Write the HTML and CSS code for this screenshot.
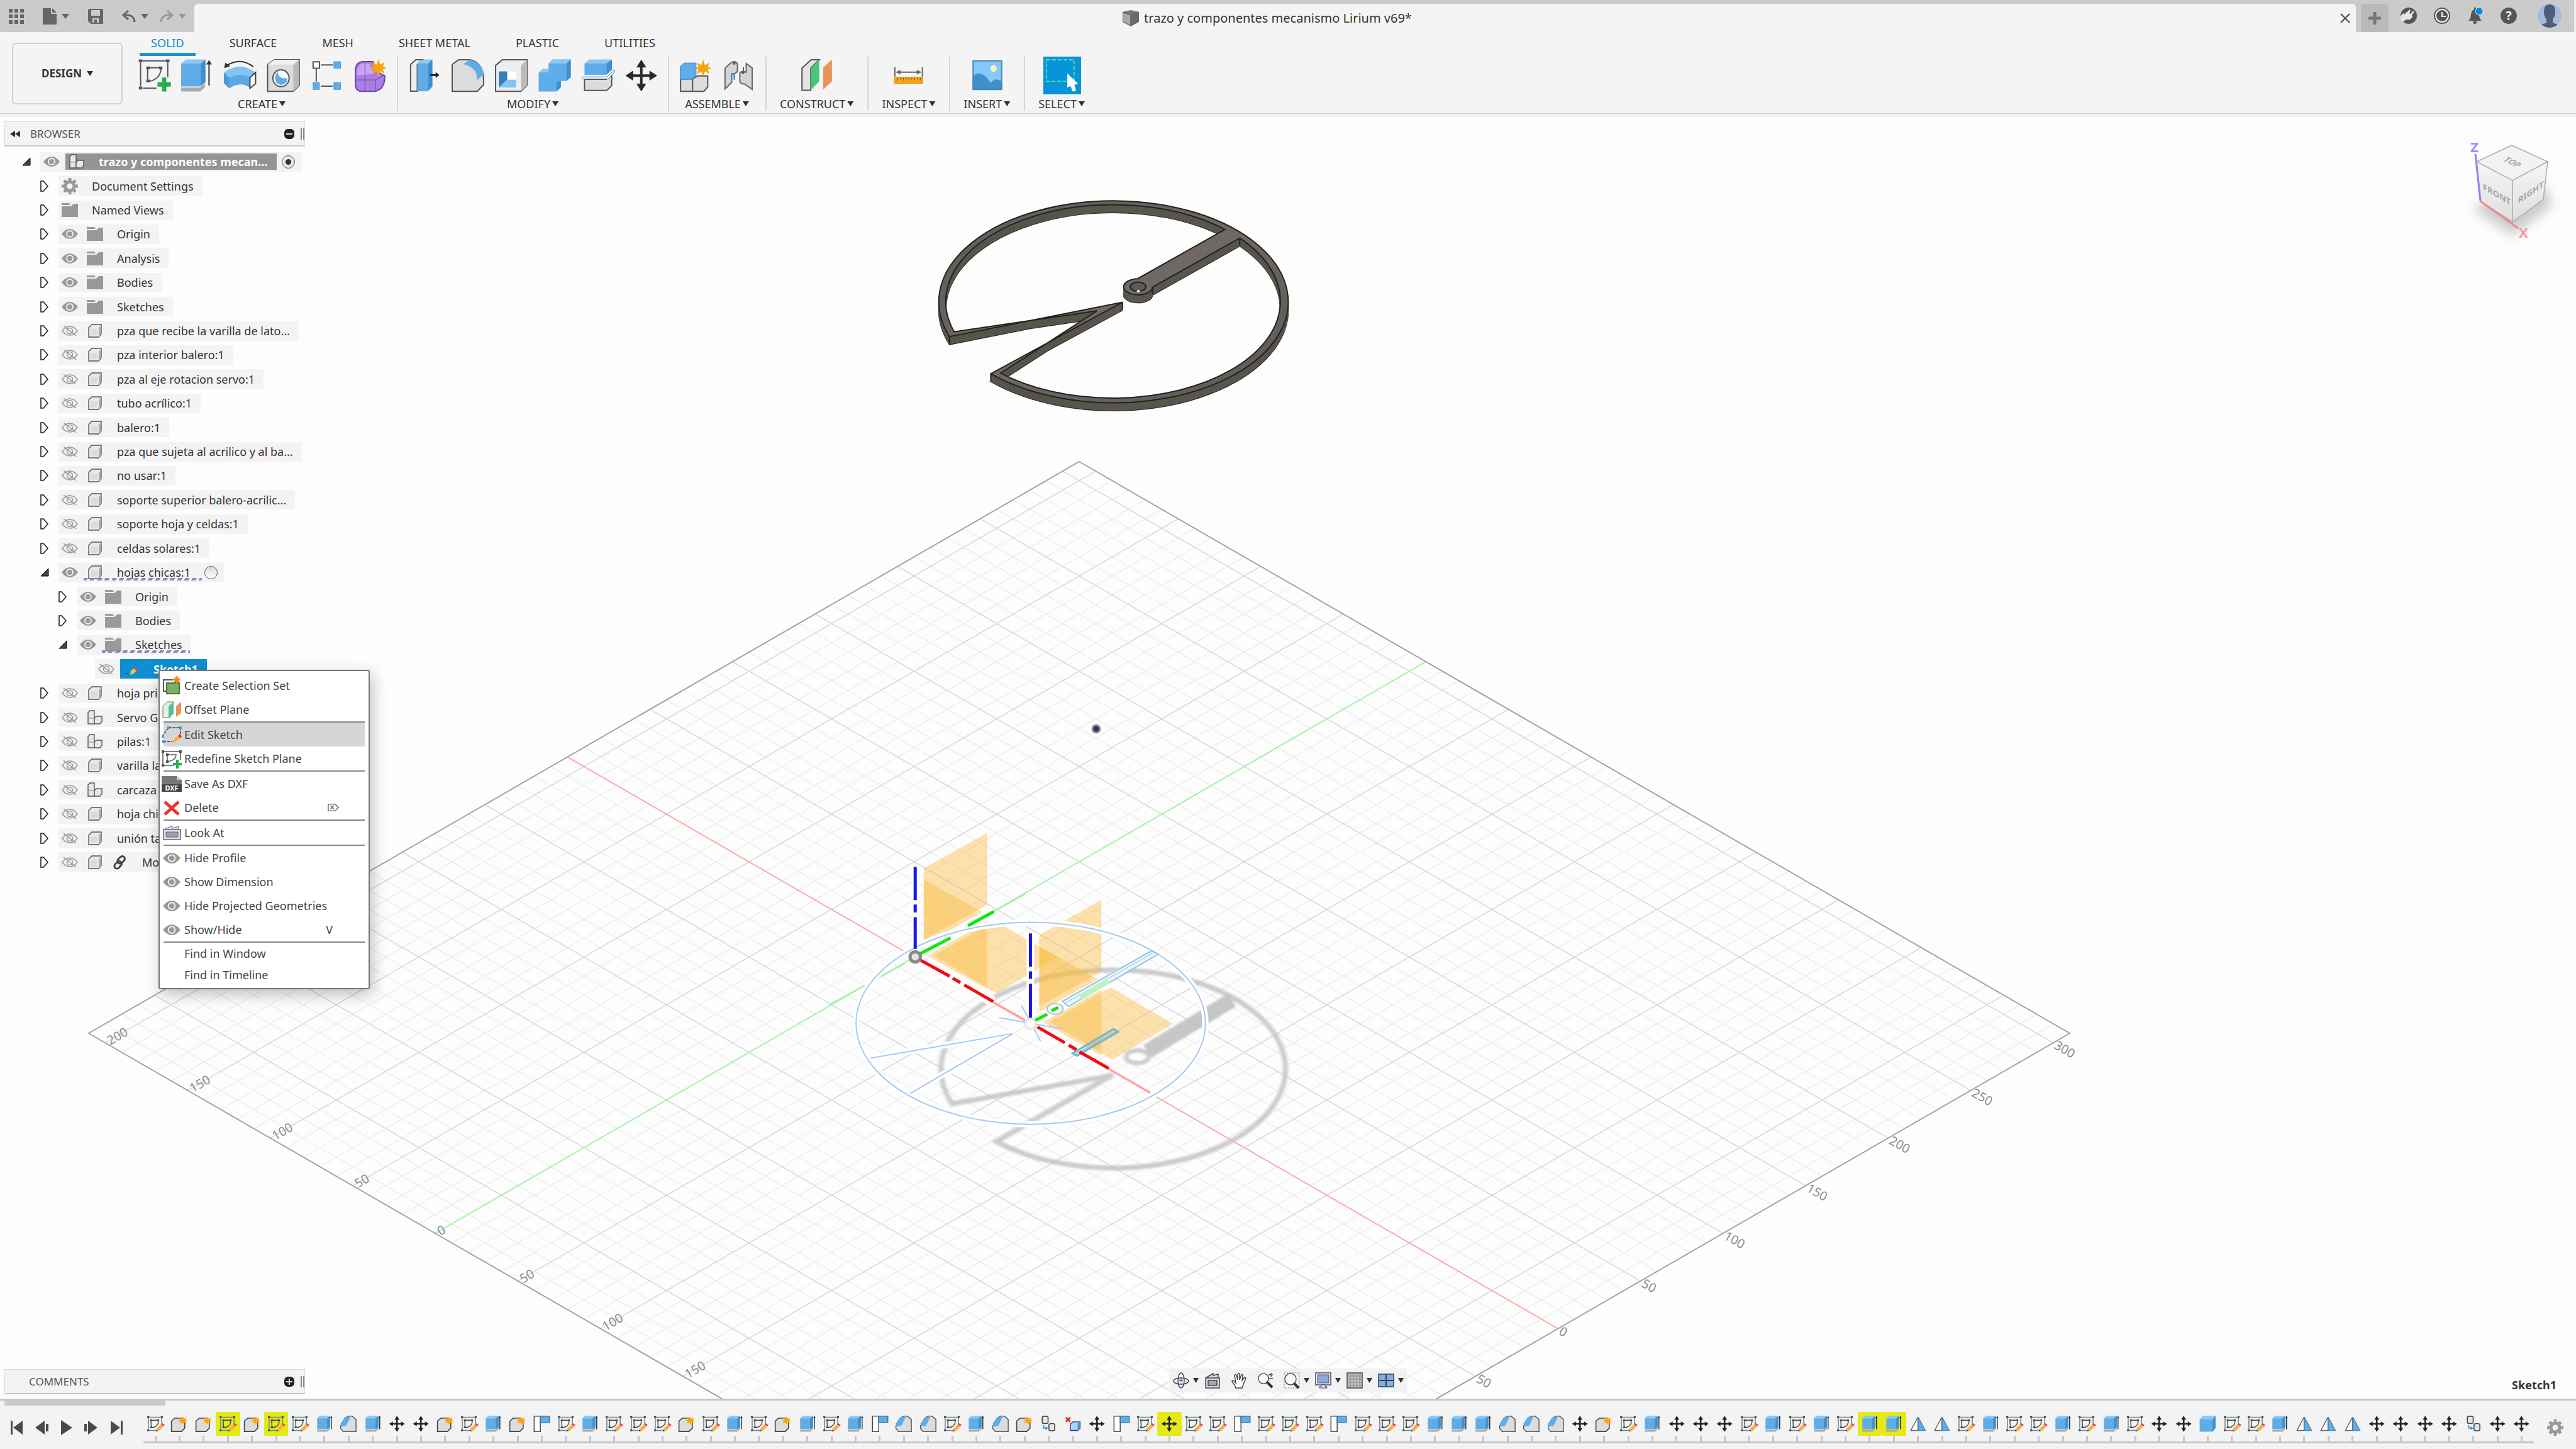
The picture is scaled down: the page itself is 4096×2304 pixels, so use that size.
FILE: index.html
```html
<!DOCTYPE html>
<html lang="es">
<head>
<meta charset="utf-8">
<title>trazo y componentes mecanismo Lirium v69*</title>
<link rel="stylesheet" href="styles.css">
</head>
<body>
<svg class="sprite" aria-hidden="true">
  <defs>
    <linearGradient id="face" x1="0" y1="0" x2="1" y2="1"><stop offset="0" stop-color="#5c5b55"/><stop offset=".5" stop-color="#6f6864"/><stop offset="1" stop-color="#5c5954"/></linearGradient>
    <linearGradient id="side" x1="0" y1="0" x2="1" y2="0"><stop offset="0" stop-color="#5b5a50"/><stop offset=".3" stop-color="#4a453f"/><stop offset=".55" stop-color="#6a6a65"/><stop offset="1" stop-color="#4a4840"/></linearGradient>
    <linearGradient id="cubeFace" x1="0" y1="0" x2="0" y2="1"><stop offset="0" stop-color="#f6f6f6"/><stop offset="1" stop-color="#dedede"/></linearGradient>
    <filter id="soft" x="-20%" y="-20%" width="140%" height="140%"><feGaussianBlur stdDeviation="4"/></filter>
    <filter id="softer" x="-50%" y="-50%" width="200%" height="200%"><feGaussianBlur stdDeviation="9"/></filter>
  </defs>
  <symbol id="eye" viewBox="0 0 26 16"><path d="M0 8Q6 0 13 0T26 8Q20 16 13 16T0 8Z" fill="#999"/><circle cx="13" cy="8" r="5" fill="#999" stroke="#eee" stroke-width="2"/></symbol>
  <symbol id="eyeoff" viewBox="0 0 26 16"><g fill="none" stroke="#999" stroke-width="1.6"><path d="M1 8Q6 1 13 1T25 8Q20 15 13 15T1 8Z"/><circle cx="13" cy="8" r="4.5"/><path d="M3 0L23 16"/></g></symbol>
  <symbol id="folder" viewBox="0 0 26 22"><path d="M0 0H12L14 3H0ZM0 5H15L19 1H26V22H0Z" fill="#999"/></symbol>
  <symbol id="body" viewBox="0 0 22 22"><path d="M1 6L6 1H21V16L17 21H1Z" fill="#e6eaee" stroke="#555" stroke-width="1.4"/><path d="M17 21V6L21 2V16Z" fill="#a8adb3"/><rect x="4" y="8" width="11" height="10" rx="2" fill="#d3dce4"/></symbol>
  <symbol id="assembly" viewBox="0 0 24 24"><g fill="#e3e8ed" stroke="#555" stroke-width="1.4"><path d="M1 4L4 1H11V22H1Z"/><path d="M11 13L14 10H23V18L20 22H11Z"/></g><path d="M1 13H11" stroke="#88a"/></symbol>
  <symbol id="cog" viewBox="-13 -13 26 26"><circle r="7" fill="none" stroke="#999" stroke-width="5"/><path d="M0-13V-7M0 13V7M-13 0H-7M13 0H7M-9-9L-5-5M9-9L5-5M-9 9L-5 5M9 9L5 5" stroke="#999" stroke-width="5"/></symbol>
  <symbol id="pencil" viewBox="0 0 26 22"><path d="M11 20L12 14L17 10L21 14L15 19Z" fill="#f2c53c"/><path d="M17 10L20 7L24 11L21 14Z" fill="#e0456a"/><path d="M2 18H8M20 2V4" stroke="#0a5d9c" stroke-width="2"/></symbol>
  <symbol id="link" viewBox="0 0 24 24"><g fill="none" stroke="#444" stroke-width="3"><rect x="10" y="2" width="8" height="13" rx="4" transform="rotate(45 14 8)"/><rect x="5" y="10" width="8" height="13" rx="4" transform="rotate(45 9 16)"/></g></symbol>
  <symbol id="open" viewBox="0 0 14 14"><path d="M1 13H13V1Z" fill="#444" stroke="#000"/></symbol>
  <symbol id="closed" viewBox="0 0 14 18"><path d="M1 1H5L12 9L5 17H1Z" fill="#fff" stroke="#222" stroke-width="1.6"/></symbol>

  <symbol id="tK" viewBox="0 0 58 144" preserveAspectRatio="none"><path d="M12 32H44V78M12 32V112H34" fill="none" stroke="#678b96" stroke-width="1.6"/><path d="M18 50H36V62Q34 92 19 95Z" fill="none" stroke="#444" stroke-width="1.4"/><path d="M9 26h5v10h-5zM42 26h5v10h-5zM9 106h5v10h-5zM16 45h5v10h-5zM33 45h5v10h-5zM16 88h5v10h-5z" fill="#444"/><path d="M31 102L42 76L49 86L38 114L30 118Z" fill="#f6b13c"/><path d="M42 76L45 68L51 78L49 86Z" fill="#e23d6d"/><path d="M30 118L31 108L35 115Z" fill="#4a2d7c"/></symbol>
  <symbol id="tC" viewBox="0 0 58 144" preserveAspectRatio="none"><path d="M10 55L18 38H34L42 60V98L34 118H10Z" fill="#dcdcdc" stroke="#444" stroke-width="1.6"/><path d="M38 28L40 41L47 33L43 47L49 52L43 57L47 70L40 63L37 76L35 63L28 70L32 56L26 51L32 46L28 34L35 41Z" fill="#f9a50a"/></symbol>
  <symbol id="tE" viewBox="0 0 58 144" preserveAspectRatio="none"><path d="M11 108H35L42 92V104L35 119H11Z" fill="#aaa"/><path d="M11 40L17 25H42V92L35 104H11Z" fill="#5fade8"/><path d="M11 40L17 25H42L35 40Z" fill="#8cc8f6"/><path d="M35 40L42 25V92L35 104Z" fill="#3f90d0"/><path d="M45 104V34" stroke="#222" stroke-width="1.4"/><path d="M42 36L45 25L48 36Z" fill="#222"/></symbol>
  <symbol id="tF" viewBox="0 0 58 144" preserveAspectRatio="none"><path d="M10 84L20 38L28 26H38L47 45V119H16L10 100Z" fill="#dcdcdc" stroke="#555" stroke-width="1.4"/><path d="M10 70L20 32L34 28L23 84L12 88Z" fill="#5fade8"/></symbol>
  <symbol id="tM" viewBox="0 0 58 144" preserveAspectRatio="none"><path d="M29 34V110M16 72H42" stroke="#222" stroke-width="2.6"/><path d="M29 24L35 47H23ZM29 120L35 97H23ZM10 72L19 58V86ZM48 72L39 58V86Z" fill="#222"/></symbol>
  <symbol id="tP" viewBox="0 0 58 144" preserveAspectRatio="none"><path d="M11 26H26V119H11Z" fill="#fff" stroke="#444" stroke-width="1.4"/><path d="M26 26H48V64H26Z" fill="#5fade8" stroke="#3a6d96" stroke-width="1.4"/></symbol>
  <symbol id="tJ" viewBox="0 0 58 144" preserveAspectRatio="none"><g fill="#e4e4e4" stroke="#444" stroke-width="1.6"><rect x="14" y="26" width="14" height="44" rx="7"/><rect x="30" y="70" width="14" height="44" rx="7"/></g><path d="M17 80V98H25M22 90L26 98L22 106" fill="none" stroke="#4a98d6" stroke-width="2"/></symbol>
  <symbol id="tX" viewBox="0 0 58 144" preserveAspectRatio="none"><path d="M12 34L22 60M22 34L12 60" stroke="#e03030" stroke-width="3"/><path d="M23 72L29 60H46V98L40 112H23Z" fill="#a8d8f8" stroke="#337" stroke-width="1.4"/><path d="M40 72L46 60V98L40 112Z" fill="#4a98d6"/></symbol>
  <symbol id="tT" viewBox="0 0 58 144" preserveAspectRatio="none"><path d="M28 32V112H11Z" fill="#fff" stroke="#666" stroke-width="1.4"/><path d="M29 32V112H46Z" fill="#5fade8" stroke="#4a88b8" stroke-width="1.4"/></symbol>
  <symbol id="tB" viewBox="0 0 58 144" preserveAspectRatio="none"><path d="M10 45L17 25H48V98L41 119H10Z" fill="#5fade8"/><path d="M10 45L17 25H48L41 45Z" fill="#8cc8f6"/><path d="M41 45L48 25V98L41 119Z" fill="#3f90d0"/></symbol>
</svg>

<header class="topbar">
  <div class="quick">
    <button class="q" aria-label="Data panel"><svg width="24" height="24" viewBox="0 0 24 24"><path d="M0 0h6v6H0zM9 0h6v6H9zM18 0h6v6h-6zM0 9h6v6H0zM9 9h6v6H9zM18 9h6v6h-6zM0 18h6v6H0zM9 18h6v6H9zM18 18h6v6h-6z"/></svg></button>
    <button class="q file" aria-label="File"><svg width="22" height="26" viewBox="0 0 22 26"><path d="M0 0H13V9H22V26H0ZM15 0L22 7H15Z"/></svg><i class="tri big"></i></button>
    <button class="q" aria-label="Save"><svg width="24" height="24" viewBox="0 0 24 24"><path fill-rule="evenodd" d="M0 2Q0 0 2 0H22Q24 0 24 2V24H5L0 20ZM5 2V11H19V2ZM7 15V22H10V17H14V22H17V15Z"/></svg></button>
    <button class="q undo" aria-label="Undo"><svg width="22" height="20" viewBox="0 0 22 20"><path d="M10 1L2 8L10 15M3 8Q19 6 20 19" fill="none" stroke="#666" stroke-width="3"/></svg><i class="tri big"></i></button>
    <button class="q redo" aria-label="Redo"><svg width="22" height="20" viewBox="0 0 22 20"><path d="M12 1L20 8L12 15M19 8Q3 6 2 19" fill="none" stroke="#999" stroke-width="3"/></svg><i class="tri big"></i></button>
  </div>
  <div class="doc-tab">
    <span class="doc-title"><svg width="26" height="26" viewBox="0 0 26 26"><path d="M0 3L13 0L26 3V19L13 26L0 19Z" fill="#6a6a6a"/><path d="M1 5L12 8V24L1 18Z" fill="#a8a8a8"/><path d="M1 3L13 1L25 3L12 6Z" fill="#7c7c7c"/></svg>trazo y componentes mecanismo Lirium v69*</span>
    <button class="close" aria-label="Close"><svg width="16" height="16" viewBox="0 0 16 16"><path d="M1 1L15 15M15 1L1 15" stroke="#555" stroke-width="2.4"/></svg></button>
  </div>
  <button class="new-tab" aria-label="New tab"><svg width="20" height="20" viewBox="0 0 20 20"><path d="M10 0V20M0 10H20" stroke="#777" stroke-width="5"/></svg></button>
  <div class="status">
    <button aria-label="Extensions"><svg width="26" height="26" viewBox="0 0 26 26"><circle cx="13" cy="13" r="13" fill="#555"/><path d="M0 14L4 9L7 11Q8 7 11 7L14 3L16 5L14 9L16 10L20 5L22 7L18 12L19 14Q17 21 9 19L4 23L0 19Z" fill="#e6e6e6"/></svg></button>
    <button aria-label="Job status"><svg width="26" height="26" viewBox="0 0 26 26"><circle cx="13" cy="13" r="12" fill="#f5f5f5" stroke="#555" stroke-width="2"/><circle cx="13" cy="13" r="9" fill="#555"/><path d="M13 7V14H19" fill="none" stroke="#eee" stroke-width="2"/></svg></button>
    <button aria-label="Notifications"><svg width="26" height="26" viewBox="0 0 26 26"><path d="M2 21Q6 18 6 11Q7 4 11 3V0H14V3Q18 4 19 11Q19 18 23 21ZM9 22H16Q15 26 12 26T9 22Z" fill="#555"/><circle cx="19" cy="6" r="6" fill="#0a8ae0" stroke="#cfe6f5"/></svg></button>
    <button class="help" aria-label="Help">?</button>
    <button aria-label="Account" class="avatar"><svg width="38" height="38" viewBox="0 0 38 38"><clipPath id="av"><circle cx="19" cy="19" r="19"/></clipPath><g clip-path="url(#av)"><path d="M0 0H38V38H0Z" fill="#a9b9dd"/><path d="M10 12Q10 1 19 1T28 12Q28 21 24 24V30L34 34V38H4V34L14 30V24Q10 21 10 12Z" fill="#4d5f78"/></g></svg></button>
  </div>
</header>

<section class="toolbar">
  <button class="workspace">DESIGN<i class="tri"></i></button>
  <div class="ribbon">
    <nav class="tabs">
      <a href="#solid" class="on">SOLID</a><a href="#surface">SURFACE</a><a href="#mesh">MESH</a><a href="#sheet">SHEET METAL</a><a href="#plastic">PLASTIC</a><a href="#utilities">UTILITIES</a>
    </nav>
    <div class="groups">
      <div class="group"><div class="tools">
        <button aria-label="Create Sketch"><svg class="z" viewBox="378 337 107 225" preserveAspectRatio="none"><path d="M400 362H467M395 372V515M402 525H440M472 372V460M420 404H447M415 412V474M453 412Q450 470 421 484" fill="none" stroke="#555" stroke-width="2"/><path d="M390 354h10v17h-10zM467 354h10v17h-10zM390 516h10v17h-10zM411 396h10v17h-10zM447 396h10v17h-10zM411 474h10v17h-10z" fill="#555"/><path d="M456 462H468V490H481V516H468V545H456V516H443V490H456Z" fill="#22ae4b"/></svg></button>
        <button aria-label="Extrude"><svg class="z" viewBox="507 337 107 225" preserveAspectRatio="none"><path d="M516 522H570L584 496V518L570 545H516Z" fill="#aaa"/><path d="M516 378H571V515H516Z" fill="#5fade8"/><path d="M516 378L530 354H585L571 378Z" fill="#8cc8f6"/><path d="M571 378L585 354V490L571 515Z" fill="#3f90d0"/><path d="M595 510V380" stroke="#333" stroke-width="2"/><path d="M587 384L595 358L603 384Z" fill="#333"/></svg></button>
        <button aria-label="Revolve"><svg class="z" viewBox="629 337 107 225" preserveAspectRatio="none"><path d="M643 392Q682 338 720 398" fill="none" stroke="#333" stroke-width="2"/><path d="M637 406L640 374L654 394Z" fill="#333"/><path d="M636 432Q682 360 726 432L712 462Q682 430 652 462Z" fill="#83c4f4"/><path d="M636 432L652 462V527L636 495Z" fill="#4a98d6"/><path d="M652 462Q682 430 712 462V525Q682 480 652 527Z" fill="#5aa9e4"/><path d="M710 462L726 432V498L710 526Z" fill="#f8f8f8" stroke="#444" stroke-width="2"/></svg></button>
        <button aria-label="Hole"><svg class="z" viewBox="751 337 107 225" preserveAspectRatio="none"><path d="M759 385L778 356H849V508L832 544H759Z" fill="#dcdcdc" stroke="#555" stroke-width="2"/><path d="M759 385L778 356H849L832 385Z" fill="#f0f0f0"/><path d="M832 385L849 356V508L832 544Z" fill="#bbb"/><ellipse cx="797" cy="466" rx="23" ry="50" fill="#fff" stroke="#555" stroke-width="2"/><path d="M788 428Q776 455 783 490Q797 520 812 492Q816 480 815 465Q790 475 788 428Z" fill="#5fade8"/></svg></button>
        <button aria-label="Pattern"><svg class="z" viewBox="868 337 107 225" preserveAspectRatio="none"><path d="M882 368H900V406H882Z" fill="#fff" stroke="#555" stroke-width="2"/><path d="M941 367H960V406H941ZM882 492H900V533H882ZM941 492H960V533H941Z" fill="#5fade8" stroke="#4a98d6"/><path d="M904 387H938M904 513H938M891 412V486" stroke="#555" stroke-width="2"/></svg></button>
        <button aria-label="Create Form"><svg class="z" viewBox="994 337 107 225" preserveAspectRatio="none"><path d="M1005 410Q1008 370 1025 367H1055Q1068 440 1088 450Q1090 500 1076 530L1062 544H1018Q1004 535 1005 500Z" fill="#a97ee2" stroke="#6d41b4" stroke-width="2"/><path d="M1010 425Q1012 385 1026 378H1045L1058 440L1010 450Z" fill="#c9a4f4"/><path d="M1007 476H1062L1085 450M1032 370V544M1062 476V540" fill="none" stroke="#6d41b4"/><path d="M1070 352L1075 385L1088 370L1083 395L1093 404L1083 413L1088 440L1075 424L1070 455L1065 424L1052 440L1057 413L1047 404L1057 395L1052 370L1065 385Z" fill="#f9a50a"/></svg></button>
      </div><button class="label">CREATE<i class="tri"></i></button></div>
      <div class="group"><div class="tools">
        <button aria-label="Press Pull"><svg class="z" viewBox="1147 337 107 225" preserveAspectRatio="none"><path d="M1182 543H1161V384L1176 356H1195L1180 384V543Z" fill="#eee" stroke="#555" stroke-width="2"/><path d="M1180 378H1210V544H1180Z" fill="#5fade8"/><path d="M1180 378L1194 354H1223L1210 378Z" fill="#8cc8f6"/><path d="M1210 378L1223 354V515L1210 544Z" fill="#3f90d0"/><path d="M1216 447H1236" stroke="#222" stroke-width="3"/><path d="M1232 430L1243 447L1232 464Z" fill="#222"/></svg></button>
        <button aria-label="Fillet"><svg class="z" viewBox="1272 337 107 225" preserveAspectRatio="none"><path d="M1281 384L1299 356H1330Q1368 370 1370 470V505L1352 544H1281Z" fill="#dcdcdc" stroke="#555" stroke-width="2"/><path d="M1313 382L1330 356Q1368 375 1370 440L1352 478Q1352 400 1313 382Z" fill="#5fade8"/></svg></button>
        <button aria-label="Shell"><svg class="z" viewBox="1395 337 107 225" preserveAspectRatio="none"><path d="M1404 390L1423 356H1493V508L1476 544H1404Z" fill="#eee" stroke="#555" stroke-width="2"/><path d="M1476 390L1493 356V508L1476 544Z" fill="#bbb"/><path d="M1413 425H1462V522H1413Z" fill="#fff"/><path d="M1413 425H1437V475L1413 522Z" fill="#3580bb"/><path d="M1413 522L1437 475H1462V522Z" fill="#83c4f4"/></svg></button>
        <button aria-label="Combine"><svg class="z" viewBox="1517 337 107 225" preserveAspectRatio="none"><path d="M1525 432L1537 410H1553V378L1565 354H1616V460L1604 482H1588V520L1576 545H1525Z" fill="#5fade8"/><path d="M1553 378L1565 354H1616L1604 378ZM1525 432L1537 412H1553L1553 432Z" fill="#8cc8f6"/><path d="M1604 378L1616 354V460L1604 482ZM1576 490L1588 482V520L1576 545Z" fill="#3f90d0"/></svg></button>
        <button aria-label="Split"><svg class="z" viewBox="72 337 107 225" preserveAspectRatio="none"><path d="M87 472H149L164 445V510L150 539H87Z" fill="#dcdcdc" stroke="#555" stroke-width="2"/><path d="M87 378H149V446H87Z" fill="#5fade8"/><path d="M87 378L101 354H165L149 378Z" fill="#8cc8f6"/><path d="M149 378L165 354V415L149 446Z" fill="#3f90d0"/><path d="M80 458H152L172 415V428L154 470H80Z" fill="#fff" stroke="#2c7db8"/></svg></button>
        <button aria-label="Move"><svg class="z" viewBox="195 337 107 225" preserveAspectRatio="none"><path d="M248 375V525M220 450H276" stroke="#2a2a2a" stroke-width="4"/><path d="M248 355L262 402H234ZM248 545L262 498H234ZM203 450L225 420V480ZM293 450L271 420V480Z" fill="#2a2a2a"/></svg></button>
      </div><button class="label">MODIFY<i class="tri"></i></button></div>
      <div class="group"><div class="tools">
        <button aria-label="New Component"><svg class="z" viewBox="347 337 107 225" preserveAspectRatio="none"><path d="M358 470H392V544H358ZM392 470L406 452H435V518L424 544H392Z" fill="#dcdcdc" stroke="#555" stroke-width="2"/><path d="M357 395L368 375H402V450L390 472H357Z" fill="#5fade8" stroke="#3f88c0"/><path d="M422 355L427 388L440 373L435 397L445 406L435 415L440 440L427 425L422 454L417 425L404 440L409 415L399 406L409 397L404 373L417 388Z" fill="#f9a50a"/></svg></button>
        <button aria-label="Joint"><svg class="z" viewBox="472 337 107 225" preserveAspectRatio="none"><g fill="#d4d4d4" stroke="#666" stroke-width="2"><path d="M486 405L505 370Q516 360 521 380V425Q516 440 505 440V490L486 530Z"/><path d="M563 405L546 378V430Q532 420 528 435V485Q530 500 541 500L563 532Z"/></g><ellipse cx="512" cy="378" rx="4" ry="8" fill="#555"/><ellipse cx="537" cy="433" rx="4" ry="8" fill="#555"/><path d="M512 442V475M538 400V425" stroke="#2277bb" stroke-width="2"/></svg></button>
      </div><button class="label">ASSEMBLE<i class="tri"></i></button></div>
      <div class="group"><div class="tools">
        <button aria-label="Offset Plane"><svg class="z" viewBox="697 337 107 225" preserveAspectRatio="none"><path d="M708 405L734 356H757L733 405V538H708Z" fill="#e4e4e4" stroke="#555" stroke-width="2"/><path d="M733 405L757 355V485L733 538Z" fill="#4cc47a"/><path d="M768 403L793 355V485L768 535Z" fill="#e8935c"/></svg></button>
      </div><button class="label">CONSTRUCT<i class="tri"></i></button></div>
      <div class="group"><div class="tools">
        <button aria-label="Measure"><svg class="z" viewBox="956 337 107 225" preserveAspectRatio="none"><path d="M970 400V456M1048 400V456M980 430H1038" stroke="#666" stroke-width="2"/><path d="M972 430L986 417V443ZM1046 430L1032 417V443Z" fill="#666"/><path d="M969 461H1049V497H969Z" fill="#f9a50a" stroke="#d98a00"/><path d="M978 463V480M986 463V474M994 463V480M1002 463V474M1010 463V480M1018 463V474M1026 463V480M1034 463V474M1042 463V480" stroke="#555"/></svg></button>
      </div><button class="label">INSPECT<i class="tri"></i></button></div>
      <div class="group"><div class="tools">
        <button aria-label="Insert Image"><svg class="z" viewBox="1174 337 107 225" preserveAspectRatio="none"><path d="M1186 361H1269V534H1186Z" fill="#85c8fa"/><path d="M1186 455Q1210 405 1237 495Q1252 455 1269 488V534H1186Z" fill="#3f8fcb"/><ellipse cx="1245" cy="408" rx="9" ry="20" fill="#fdf5b8"/><path d="M1187 362H1268V533H1187Z" fill="none" stroke="#4a88b8" stroke-width="2"/></svg></button>
      </div><button class="label">INSERT<i class="tri"></i></button></div>
      <div class="group"><div class="tools">
        <button aria-label="Select"><svg class="z" viewBox="1386 337 107 225" preserveAspectRatio="none"><path d="M1386 337H1493V562H1386Z" fill="#0894d8"/><path d="M1395 356H1473V485H1395Z" fill="none" stroke="#4ce0b0" stroke-width="2" stroke-dasharray="6 3"/><path d="M1454 437L1485 500L1474 505L1479 540L1469 545L1463 512L1454 522Z" fill="#fff"/></svg></button>
      </div><button class="label">SELECT<i class="tri"></i></button></div>
    </div>
  </div>
</section>

<main class="stage">
  <svg class="canvas" viewBox="0 186 4096 2038" preserveAspectRatio="xMidYMid slice" aria-label="Model view">
    <g id="grid"></g>
    <g id="rulers" class="rulers"></g>
    <g transform="translate(1320 1280) scale(.4847 .3878)" class="z" fill="none">
      <g filter="url(#soft)" stroke="#c4c4c4" opacity=".85"><path d="M930 1108L400 1225A565 406 0 1 1 545 1380L925 1108" stroke-width="8"/><path d="M1040 1010L1318 800" stroke-width="24" stroke="#bdbdbd"/><ellipse cx="1008" cy="1032" rx="37" ry="26" stroke-width="7" fill="#fff"/></g>
      <g fill="#fab93b" fill-opacity=".42">
        <path d="M307 260L515 115V410L307 553Z"/><path d="M307 305L515 450V755L307 610Z"/><path d="M341 617L541 475L746 624L546 772Z"/>
        <path d="M686 533L890 388V683L686 826Z"/><path d="M686 578L890 723V1028L686 883Z"/><path d="M720 890L920 748L1125 897L925 1045Z"/>
      </g>
      <g stroke="#fff">
        <path d="M295 608L537 437M675 882L900 725M290 632L535 806" stroke-width="17"/>
        <path d="M279 252V600M657 527V880" stroke-width="12"/>
        <ellipse cx="658" cy="895" rx="573" ry="414" stroke-width="10"/>
        <path d="M122 1038L600 937L262 1183M680 910L780 985M760 812L1062 605" stroke-width="10"/>
      </g>
      <path d="M0 817L110 742M165 705L245 650M537 437L640 365" stroke="#a2f3a2" stroke-width="2"/>
      <path d="M537 808L640 880M914 1080L1050 1178" stroke="#ff9c9c" stroke-width="2"/>
      <ellipse cx="658" cy="895" rx="573" ry="414" stroke="#a7c8f3" stroke-width="2"/>
      <path d="M132 1038L600 937L262 1183M555 872L762 918M628 822L690 968" stroke="#a7c8f3" stroke-width="2"/>
      <path d="M762 805L1055 597L1076 612L782 826Z" fill="#d9eef0" fill-opacity=".5" stroke="#8fc3ea" stroke-width="2"/>
      <path d="M772 812L1062 604" stroke="#8fc3ea"/>
      <path d="M820 790L912 722" stroke="#bff0c4" stroke-width="9"/>
      <path d="M795 1018L930 918L945 930L810 1028Z" stroke="#6fb7cf" stroke-width="3" fill="#8bb" fill-opacity=".4"/>
      <path d="M279 254V390M279 408V440M279 460V590M657 527V663M657 682V713M657 733V872" stroke="#1616ee" stroke-width="5"/>
      <path d="M290 632L392 702M402 710L427 728M440 738L535 806M680 910L770 975M783 985L808 1003M818 1012L914 1080" stroke="#f20d12" stroke-width="5"/>
      <path d="M295 610L395 545M452 495L537 437M672 884L712 858M726 844L748 830" stroke="#12e612" stroke-width="5"/>
      <ellipse cx="738" cy="836" rx="26" ry="22" stroke="#a8c4c8" stroke-width="2"/>
      <ellipse cx="279" cy="623" rx="17" ry="21" fill="#e2e2e2" stroke="#888" stroke-width="5"/>
      <ellipse cx="657" cy="897" rx="17" ry="21" fill="#fff" stroke="#e4e4e4" stroke-width="3"/>
    </g>
    <g id="part" transform="translate(1400 280) scale(.4592 .2667)" class="z">
      <defs><path id="ring" fill-rule="evenodd" d="M239 957A605 602 0 1 1 382 1178L838 752ZM255 928A580 577 0 0 1 1193 318L890 612A50 48 0 1 0 942 662L1244 370A580 577 0 0 1 416 1175L750 803Z"/></defs>
    </g>
    <g><circle cx="1743" cy="1159" r="6" fill="#334" stroke="#8a8fae" stroke-width="3"/></g>
    <g class="cube">
      <path d="M3930 330L3995 375L4060 325L4040 290Z" fill="#aaa" opacity=".6" filter="url(#softer)"/>
      <path d="M3994 231L3938 257L3995 287L4051 257Z" fill="#f2f2f2"/><path d="M3938 257L3995 287V353L3944 320Z" fill="url(#cubeFace)"/><path d="M4051 257L3995 287V353L4044 317Z" fill="url(#cubeFace)"/>
      <path d="M3994 231L3938 257L3995 287L4051 257ZM3938 257L3944 320L3995 353L4044 317L4051 257M3995 287V353" fill="none" stroke="#aaa" stroke-width="1.5"/>
      <path d="M3936 245L3944 319" stroke="#8f84ea" stroke-width="3"/><path d="M3944 320L4004 363" stroke="#ee8a92" stroke-width="3"/>
      <text x="3928" y="242" font-size="22" font-weight="bold" fill="#9a94f4">Z</text><text x="4005" y="378" font-size="22" font-weight="bold" fill="#f89a9a">X</text>
      <g font-size="13" font-weight="bold" fill="#a6a6a6"><text transform="translate(3948 301) skewY(30)">FRONT</text><text transform="translate(4004 324) skewY(-34)">RIGHT</text><text transform="translate(3979 255) rotate(27) skewX(-30)">TOP</text></g>
    </g>
  </svg>
  <aside class="side">
    <section class="panel">
      <h2 class="panel-head"><svg width="16" height="12" viewBox="0 0 18 12"><path d="M9 0V12L0 6ZM18 0V12L9 6Z"/></svg><span>BROWSER</span><button class="dot" aria-label="Collapse"><svg width="16" height="16" viewBox="0 0 16 16"><rect width="16" height="16" rx="6" fill="#222"/><path d="M3 8H13" stroke="#ddd" stroke-width="2"/></svg></button><i class="grip"></i></h2>
      <ul class="tree" id="tree"></ul>
    </section>
    <section class="panel">
      <h2 class="panel-head comments"><span>COMMENTS</span><button class="dot" aria-label="Add comment"><svg width="16" height="16" viewBox="0 0 16 16"><rect width="16" height="16" rx="6" fill="#222"/><path d="M3 8H13M8 3V13" stroke="#ddd" stroke-width="2"/></svg></button><i class="grip"></i></h2>
    </section>
  </aside>
  <div class="navbar">
    <button aria-label="Orbit"><svg width="26" height="26" viewBox="0 0 26 26" fill="none" stroke="#444" stroke-width="1.5"><ellipse cx="13" cy="13" rx="5" ry="12"/><ellipse cx="13" cy="14" rx="12" ry="5"/><path d="M13 10V16M10 13H16" stroke="#37c"/></svg><i class="tri"></i></button>
    <button aria-label="Look At"><svg width="26" height="26" viewBox="0 0 26 26" fill="#ddd" stroke="#444" stroke-width="1.5"><path d="M2 9L14 2V5L22 3V9M2 9H24V25H2Z"/><path d="M6 13H20V21H6Z" fill="#9ab"/></svg></button>
    <button aria-label="Pan"><svg width="26" height="26" viewBox="0 0 26 26" fill="#fff" stroke="#444" stroke-width="1.5"><path d="M8 25Q6 19 2 15Q2 12 5 14L8 17L6 5Q8 2 9 5L11 12V3Q13 0 14 3V12L17 4Q19 2 19 6L18 13L22 8Q25 8 23 12Q20 18 18 25Z"/></svg></button>
    <button aria-label="Zoom"><svg width="26" height="26" viewBox="0 0 26 26"><circle cx="10" cy="10" r="8" fill="#f8f8f8" stroke="#555" stroke-width="1.5"/><path d="M15 15L24 24" stroke="#333" stroke-width="4"/><path d="M18 4H25M22 1V7M18 10H25" stroke="#444" stroke-width="1.5"/></svg></button>
    <button aria-label="Fit"><svg width="26" height="26" viewBox="0 0 26 26"><path d="M1 1H25V25H1Z" fill="none" stroke="#777" stroke-dasharray="2 2"/><circle cx="11" cy="11" r="9" fill="#f8f8f8" stroke="#555" stroke-width="1.5"/><path d="M16 17L24 25" stroke="#333" stroke-width="4"/></svg><i class="tri"></i></button>
    <button aria-label="Display Settings"><svg width="26" height="26" viewBox="0 0 26 26"><path d="M1 1H25V20H1Z" fill="#fff" stroke="#446" stroke-width="1.5"/><path d="M4 4H22V17H4Z" fill="#8fa6d8" stroke="#446"/><path d="M10 20H16V23H19V25H7V23H10Z" fill="#eee" stroke="#444"/></svg><i class="tri"></i></button>
    <button aria-label="Grid and Snaps"><svg width="26" height="26" viewBox="0 0 26 26"><path d="M1 1H25V25H1Z" fill="#c0c0c0" stroke="#444" stroke-width="1.5"/><path d="M6 1V25M11 1V25M16 1V25M21 1V25M1 6H25M1 11H25M1 16H25M1 21H25" stroke="#888"/></svg><i class="tri"></i></button>
    <button aria-label="Viewports"><svg width="26" height="26" viewBox="0 0 26 26"><path d="M1 3H25V23H1Z" fill="#86acd8" stroke="#24466e" stroke-width="1.5"/><path d="M13 3V23M1 13H25" stroke="#24466e" stroke-width="2"/></svg><i class="tri"></i></button>
  </div>
  <strong class="selection">Sketch1</strong>

  <div class="menu" role="menu">
    <button role="menuitem"><svg viewBox="0 0 34 34"><path d="M4 8H24V26H4Z" fill="none" stroke="#555" stroke-width="2"/><path d="M9 13H29V30H9Z" fill="#7fb069" stroke="#4e7a3a" stroke-width="2"/><path d="M25 2V14M19 8H31M21 4L29 12M29 4L21 12" stroke="#e8861a" stroke-width="2"/></svg>Create Selection Set</button>
    <button role="menuitem"><svg viewBox="0 0 34 34"><path d="M3 12L10 5H20L15 11V30H3Z" fill="#e4efe9" stroke="#5a7a6a"/><path d="M12 12L20 5V24L12 30Z" fill="#4cc48a"/><path d="M24 12L32 5V23L24 29Z" fill="#e8935c"/></svg>Offset Plane</button>
    <hr>
    <button role="menuitem" class="hot"><svg viewBox="0 0 34 34"><path d="M2 20L12 6H31V20M4 28H18" fill="none" stroke="#555" stroke-width="2" stroke-dasharray="4 2"/><path d="M1 18h4v4h-4zM10 4h4v4h-4zM29 4h4v4h-4zM2 26h4v4h-4z" fill="#4a98d6"/><path d="M18 30L20 25L27 19L30 23L23 29Z" fill="#f2b53c"/><path d="M27 19L30 16L33 20L30 23Z" fill="#d33"/></svg>Edit Sketch</button>
    <button role="menuitem"><svg viewBox="0 0 34 34"><path d="M3 6H31V20M3 6V28H20M10 11H24Q24 20 10 22Z" fill="none" stroke="#555" stroke-width="1.5"/><path d="M1 4h4v4h-4zM29 4h4v4h-4zM1 26h4v4h-4zM8 9h4v4h-4zM8 20h4v4h-4z" fill="#555"/><path d="M26 19V33M19 26H33" stroke="#22ae4b" stroke-width="4"/></svg>Redefine Sketch Plane</button>
    <hr>
    <button role="menuitem"><svg viewBox="0 0 34 34"><path d="M1 5H25L33 11V30H1Z" fill="#777"/><path d="M25 5L33 11H25Z" fill="#ccc"/><path d="M1 18H33V30H1Z" fill="#444"/><text x="17" y="28" text-anchor="middle" font-size="11" font-weight="bold" fill="#fff">DXF</text></svg>Save As DXF</button>
    <button role="menuitem"><svg viewBox="0 0 34 34"><path d="M6 8L28 28M28 8L6 28" stroke="#e8332e" stroke-width="5"/></svg>Delete<kbd><svg viewBox="0 0 20 14" class="del"><path d="M1 1H13L19 7L13 13H1ZM5 4L11 10M11 4L5 10" fill="none" stroke="#555" stroke-width="1.5"/></svg></kbd></button>
    <hr>
    <button role="menuitem"><svg viewBox="0 0 34 34"><path d="M4 12L18 6V10L28 7V12" fill="#ddd" stroke="#667"/><path d="M4 12H31V28H4Z" fill="#dde" stroke="#667" stroke-width="1.5"/><path d="M8 16H27V24H8Z" fill="#9aa3ae" stroke="#667"/></svg>Look At</button>
    <hr>
    <button role="menuitem"><svg><use href="#eye" x="3" y="9" width="28" height="17"/></svg>Hide Profile</button>
    <button role="menuitem"><svg><use href="#eye" x="3" y="9" width="28" height="17"/></svg>Show Dimension</button>
    <button role="menuitem"><svg><use href="#eye" x="3" y="9" width="28" height="17"/></svg>Hide Projected Geometries</button>
    <button role="menuitem"><svg><use href="#eye" x="3" y="9" width="28" height="17"/></svg>Show/Hide<kbd>V</kbd></button>
    <hr>
    <button role="menuitem" class="plain">Find in Window</button>
    <button role="menuitem" class="plain">Find in Timeline</button>
  </div>
</main>

<footer class="timeline">
  <div class="scroll"></div>
  <div class="line">
    <div class="play">
      <button aria-label="Start"><svg width="20" height="22" viewBox="0 0 20 22"><path d="M0 0H3V22H0ZM19 0V22L4 11Z"/></svg></button>
      <button aria-label="Step back"><svg width="22" height="22" viewBox="0 0 22 22"><path d="M15 0V22L0 11ZM17 5H21V17H17Z"/></svg></button>
      <button aria-label="Play"><svg width="18" height="24" viewBox="0 0 18 24"><path d="M0 0L18 12L0 24Z"/></svg></button>
      <button aria-label="Step forward"><svg width="22" height="22" viewBox="0 0 22 22"><path d="M6 0V22L21 11ZM0 5H4V17H0Z"/></svg></button>
      <button aria-label="End"><svg width="20" height="22" viewBox="0 0 20 22"><path d="M17 0H20V22H17ZM1 0V22L16 11Z"/></svg></button>
    </div>
    <div class="track" id="track"></div>
    <button class="settings" aria-label="Timeline settings"><svg width="26" height="26"><use href="#cog"/></svg></button>
  </div>
</footer>
<script src="app.js"></script>
</body>
</html>
```
FILE: styles.css
```css
* { box-sizing: border-box; }
body {
  margin: 0;
  height: 100vh;
  display: grid;
  grid-template-rows: 51px 135px 1fr 80px;
  font: 18px/24px "Noto Sans", "Open Sans", sans-serif;
  color: #333;
  background: #fdfdfd;
  overflow: hidden;
}
button {
  font: inherit;
  color: inherit;
  background: none;
  border: 0;
  padding: 0;
  margin: 0;
  display: flex;
  align-items: center;
  justify-content: center;
}
svg { display: block; flex: none; }
.sprite { position: absolute; width: 0; height: 0; }
.z *, symbol * { vector-effect: non-scaling-stroke; }
.tri {
  flex: none;
  width: 10px;
  height: 8px;
  background: #333;
  clip-path: polygon(0 0, 100% 0, 50% 100%);
}
.tri.big { width: 12px; }

/* top bar */
.topbar { display: flex; background: #cbcbcb; padding-top: 6px; border-right: 3px solid #eee; }
.quick { width: 309px; flex: none; display: flex; align-items: center; padding: 0 11px 5px 14px; }
.q svg { fill: #666; }
.q .tri { background: #666; margin-left: 8px; }
.q.file { margin: 0 30px; }
.q.undo { margin-left: 30px; }
.q.redo { margin-left: 18px; }
.q.redo .tri { background: #999; }
.doc-tab {
  flex: 1;
  display: flex;
  align-items: center;
  background: #f4f4f4;
  border-radius: 6px 6px 0 0;
  padding: 0 9px 0 0;
}
.doc-title { flex: 1; display: flex; justify-content: center; align-items: center; gap: 8px; font-size: 20px; }
.new-tab { width: 44px; margin-left: 8px; background: #b9b9b9; border-radius: 6px 6px 0 0; }
.status { display: flex; align-items: center; gap: 27px; padding: 0 20px 7px 19px; }
.help { width: 26px; height: 26px; border-radius: 50%; background: #555; color: #eee; font-weight: bold; font-size: 20px; }
.avatar { margin-left: 6px; }

/* toolbar */
.toolbar {
  display: flex;
  background: #f4f4f4;
  border-bottom: 1px solid #e4e4e4;
  box-shadow: inset 0 -3px 0 #fbfbfb, inset 0 -5px 0 #d2d2d2;
}
.workspace {
  width: 176px;
  height: 98px;
  margin: 17px 15px 0 19px;
  border: 2px solid #d2d2d2;
  border-radius: 6px;
  font-weight: bold;
  font-size: 17px;
  gap: 8px;
}
.ribbon { flex: 1; }
.tabs { display: flex; gap: 36px; padding-left: 12px; }
.tabs a { color: #333; text-decoration: none; padding: 5px 18px 4px; border-bottom: 5px solid transparent; }
.tabs a.on { color: #0a8fd0; border-color: #1b93cc; }
.groups { display: flex; }
.group { padding: 0 12px; position: relative; border-right: 2px solid #d6d6d6; height: 86px; margin-top: 1px; }
.group:first-child { padding-left: 4px; }
.group:last-child { border: 0; }
.tools { display: flex; gap: 9px; justify-content: center; }
.tools svg { width: 60px; height: 60px; }
.label { width: 100%; padding: 3px 10px 0 9px; gap: 3px; }

/* stage */
.stage {
  position: relative;
  min-height: 0;
  display: grid;
  grid-template-columns: 1fr auto 1fr;
  align-items: end;
  padding: 7px;
}
.canvas { position: absolute; inset: 0; width: 100%; height: 100%; }
.rulers, .cube { font-family: "Noto Sans", sans-serif; }
.rulers { font-size: 20px; fill: #8c8c8c; }
.side { position: relative; align-self: stretch; display: flex; flex-direction: column; justify-content: space-between; width: 478px; }
.panel-head {
  margin: 0;
  height: 40px;
  display: flex;
  align-items: center;
  gap: 16px;
  padding: 0 0 0 8px;
  font-size: 17px;
  font-weight: normal;
  color: #555;
  background: #f3f3f3;
  border: 1px solid #dadada;
  border-bottom: 2px solid #c8c8c8;
}
.panel-head svg { fill: #333; }
.panel-head.comments { padding-left: 38px; }
.panel-head .dot { margin-left: auto; }
.grip { width: 6px; height: 18px; border: solid #888; border-width: 0 2px; margin-left: -6px; }
.tree {
  list-style: none;
  margin: 5px 0 0;
  padding: 0;
  height: 1152px;
  display: flex;
  flex-direction: column;
}
.row { flex: 1; display: flex; align-items: center; white-space: nowrap; }
.l0 { padding-left: 21px; }
.l1 { padding-left: 50px; }
.l2 { padding-left: 79px; }
.l3 { padding-left: 108px; }
.twist { width: 28px; margin-right: 8px; }
.chip { display: flex; align-items: center; height: 31px; background: #f3f3f3; gap: 4px; }
.cell { width: 36px; }
.node { display: flex; align-items: center; height: 26px; padding-right: 14px; }
.node .cell { display: flex; justify-content: center; margin-right: 4px; }
.node .name { padding-left: 13px; }
.l0 .node { width: 336px; background: #949494; color: #fff; font-weight: bold; }
.picked .node { background: #0f8fd2; color: #fff; font-weight: bold; height: 31px; }
.active .node { height: 31px; padding-right: 0; margin-right: 14px; }
.active .node::after {
  content: "";
  position: absolute;
  height: 4px;
  margin-top: 21px;
  width: var(--w);
  background: repeating-linear-gradient(120deg, #8390b5 0 6px, transparent 6px 10px);
}
.radio {
  appearance: none;
  width: 21px;
  height: 21px;
  margin: 0 10px 0 4px;
  border: 1px solid #555;
  border-radius: 50%;
  background: linear-gradient(#d5d9e0, #fff);
}
.radio:checked { background: radial-gradient(#333 0 4px, #e3e6ee 5px); }
.navbar { position: relative; display: flex; align-items: center; gap: 16px; height: 38px; padding: 0 12px 0 6px; margin-bottom: 3px; background: #f2f2f2; }
.navbar button { gap: 6px; }
.navbar .tri { width: 9px; margin-right: -7px; }
.selection { position: relative; justify-self: end; padding: 0 24px 3px 0; }

/* context menu */
.menu {
  position: absolute;
  left: 252px;
  top: 879px;
  width: 336px;
  padding: 4px 6px;
  background: #fff;
  border: 2px solid #777;
  border-radius: 3px;
  box-shadow: 4px 8px 24px rgba(0, 0, 0, .25);
  color: #444;
}
.menu button { width: 100%; height: 38px; justify-content: flex-start; }
.menu button > svg { width: 34px; height: 34px; margin: 0 3px 0 -4px; }
.menu .hot { background: #d6d6d6; }
.menu .plain { height: 34px; padding-left: 33px; }
.menu hr { margin: 0; border: 0; height: 2px; background: #888; }
.menu kbd { font: inherit; margin-left: auto; padding-right: 51px; }
.menu .del { width: 18px; height: 14px; margin-right: -10px; }

/* timeline */
.timeline { background: #f3f3f3; border-top: 3px solid #c6c6c6; }
.scroll { width: 256px; height: 8px; margin-left: 7px; background: #cbcbcb; }
.line { display: flex; padding-top: 10px; }
.play { width: 228px; flex: none; height: 50px; display: flex; gap: 19px; padding-left: 17px; align-items: center; }
.play svg { fill: #4a4a4a; }
.track { flex: 1; display: flex; height: 50px; }
.step { flex: 1; display: flex; flex-direction: column; align-items: center; justify-content: flex-start; border-bottom: 3px solid #c6c6c6; }
.step::after { content: ""; width: 3px; height: 9px; background: #c6c6c6; }
.step svg { width: 100%; height: 38px; border-radius: 3px; }
.step.marked svg { background: #e4ea16; }
.settings { width: 67px; height: 50px; }
```
FILE: app.js
```js
const NS = 'http://www.w3.org/2000/svg';
function add(parent, tag, attrs, text) {
  const el = document.createElementNS(NS, tag);
  for (const k in attrs) el.setAttribute(k, attrs[k]);
  if (text !== undefined) el.textContent = text;
  parent.appendChild(el);
  return el;
}

// Ground plane: isometric grid, 12 major cells per side, 5 minor cells each.
const DX = 131.25, DY = 75.75, TOP = [1716, 734], N = 12;
const at = (i, j) => [TOP[0] + (i - j) * DX, TOP[1] + (i + j) * DY];
const seg = (a, b) => `M${a}L${b}`;
let minor = '', major = '';
for (let k = 1; k < N * 5; k++) {
  const t = k / 5, d = seg(at(t, 0), at(t, N)) + seg(at(0, t), at(N, t));
  if (k % 5 === 1) major += d; else minor += d;
}
const grid = document.getElementById('grid');
add(grid, 'path', { d: minor, stroke: '#ededed', 'stroke-width': 1.5 });
add(grid, 'path', { d: major, stroke: '#d6d6d6', 'stroke-width': 1.5 });
add(grid, 'path', { d: seg(at(0, 6.2), at(N, 6.2)), stroke: '#ffabab', 'stroke-width': 2 });
add(grid, 'path', { d: seg(at(4.2, 0), at(4.2, N)), stroke: '#a8f3a8', 'stroke-width': 2 });
add(grid, 'path', { d: `M${at(0, 0)}L${at(N, 0)}L${at(N, N)}L${at(0, N)}Z`, fill: 'none', stroke: '#a4a4a4', 'stroke-width': 2 });
const rulers = document.getElementById('rulers');
[200, 150, 100, 50, 0, 50, 100, 150].forEach((v, k) => {
  const [x, y] = at(k + .2, N);
  add(rulers, 'text', { transform: `translate(${x + 8} ${y + 4}) rotate(-30)` }, v);
});
[300, 250, 200, 150, 100, 50, 0, 50].forEach((v, k) => {
  const [x, y] = at(N, k + .2);
  add(rulers, 'text', { transform: `translate(${x} ${y + 8}) rotate(30)` }, v);
});

// Extruded blade: stacked copies of the outline, then the top face.
const part = document.getElementById('part');
add(part, 'use', { href: '#ring', y: 47, fill: '#4d4b45', stroke: '#22221f', 'stroke-width': 2 });
for (let y = 45; y > 0; y -= 3) add(part, 'use', { href: '#ring', y, fill: 'url(#side)', stroke: '#57554d', 'stroke-width': 1 });
add(part, 'use', { href: '#ring', fill: 'url(#face)', stroke: '#22221f', 'stroke-width': 2 });
add(part, 'path', { d: 'M239 957V1005M382 1178V1222M838 752V797M1244 370V412M942 662V705', stroke: '#22221f', 'stroke-width': 2 });
add(part, 'ellipse', { cx: 892, cy: 660, rx: 27, ry: 27, fill: '#5c5b56', stroke: '#22221f', 'stroke-width': 2 });
add(part, 'ellipse', { cx: 893, cy: 686, rx: 6, ry: 6, fill: '#fff' });

// Browser tree: [level, state, eye, icon, name, flag, underline width]
const rows = [
  [0, 'open', 'eye', 'assembly', 'trazo y componentes mecan...', 'root'],
  [1, 'closed', '', 'cog', 'Document Settings'],
  [1, 'closed', '', 'folder', 'Named Views'],
  [1, 'closed', 'eye', 'folder', 'Origin'],
  [1, 'closed', 'eye', 'folder', 'Analysis'],
  [1, 'closed', 'eye', 'folder', 'Bodies'],
  [1, 'closed', 'eye', 'folder', 'Sketches'],
  [1, 'closed', 'eyeoff', 'body', 'pza que recibe la varilla de lato...'],
  [1, 'closed', 'eyeoff', 'body', 'pza interior balero:1'],
  [1, 'closed', 'eyeoff', 'body', 'pza al eje rotacion servo:1'],
  [1, 'closed', 'eyeoff', 'body', 'tubo acrílico:1'],
  [1, 'closed', 'eyeoff', 'body', 'balero:1'],
  [1, 'closed', 'eyeoff', 'body', 'pza que sujeta al acrilico y al ba...'],
  [1, 'closed', 'eyeoff', 'body', 'no usar:1'],
  [1, 'closed', 'eyeoff', 'body', 'soporte superior balero-acrilic...'],
  [1, 'closed', 'eyeoff', 'body', 'soporte hoja y celdas:1'],
  [1, 'closed', 'eyeoff', 'body', 'celdas solares:1'],
  [1, 'open', 'eye', 'body', 'hojas chicas:1', 'active', 188],
  [2, 'closed', 'eye', 'folder', 'Origin'],
  [2, 'closed', 'eye', 'folder', 'Bodies'],
  [2, 'open', 'eye', 'folder', 'Sketches', 'active', 140],
  [3, '', 'eyeoff', 'pencil', 'Sketch1', 'picked'],
  [1, 'closed', 'eyeoff', 'body', 'hoja pri'],
  [1, 'closed', 'eyeoff', 'assembly', 'Servo G'],
  [1, 'closed', 'eyeoff', 'assembly', 'pilas:1'],
  [1, 'closed', 'eyeoff', 'body', 'varilla la'],
  [1, 'closed', 'eyeoff', 'assembly', 'carcaza'],
  [1, 'closed', 'eyeoff', 'body', 'hoja chi'],
  [1, 'closed', 'eyeoff', 'body', 'unión ta'],
  [1, 'closed', 'eyeoff', 'body', 'Mo', 'linked'],
];
const use = (id, w, h) => `<svg width="${w}" height="${h}"><use href="#${id}"/></svg>`;
const size = { folder: [26, 22], body: [22, 22], assembly: [24, 24], cog: [26, 26], pencil: [26, 22] };
document.getElementById('tree').innerHTML = rows.map(([lv, st, eye, icon, name, flag = '', w = 0]) => {
  const twist = `<button class="twist" aria-label="Expand">${st ? use(st, 14, st === 'open' ? 14 : 18) : ''}</button>`;
  const vis = eye ? `<button class="cell" aria-label="Visibility">${use(eye, 26, 16)}</button>` : '';
  const link = flag === 'linked' ? `<span class="cell">${use('link', 24, 24)}</span>` : '';
  const radio = flag === 'root' || name === 'hojas chicas:1'
    ? `<input type="radio" class="radio" name="active" aria-label="Activate" ${flag === 'root' ? 'checked' : ''}>` : '';
  return `<li class="row l${lv} ${flag}">${twist}<div class="chip">${vis}<div class="node"${w ? ` style="--w:${w}px"` : ''}>` +
    `<span class="cell">${use(icon, ...size[icon])}</span>${link}<span class="name">${name}</span></div>${radio}</div></li>`;
}).join('');

// Timeline features, one letter per step; * marks a highlighted step.
const steps = 'KCCK*CK*KEFEMMCKECPKEKK' + 'KCKEKCEKEPFFKEFCJXMPKM*KKPKK' +
  'KPKKKEEEFFFMCKEMMMKEKEKE*E*TT' + 'KEKKEKEKMMBKKETTTMMMMJMM';
const names = { K: 'Sketch', C: 'Component', E: 'Extrude', F: 'Chamfer', M: 'Move', P: 'Plane', J: 'Copy', X: 'Remove', T: 'Mirror', B: 'Body' };
document.getElementById('track').innerHTML = steps.match(/[A-Z]\*?/g).map(s =>
  `<button class="step${s[1] ? ' marked' : ''}" aria-label="${names[s[0]]}"><svg viewBox="0 0 38 38" preserveAspectRatio="none"><use href="#t${s[0]}"/></svg></button>`).join('');
```
